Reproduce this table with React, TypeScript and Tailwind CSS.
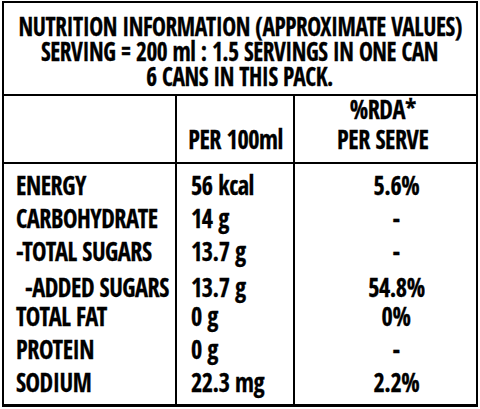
const rows: { name: string; indent?: boolean; per: string; rda: string; mt?: string }[] = [
  { name: 'ENERGY', per: '56 kcal', rda: '5.6%' },
  { name: 'CARBOHYDRATE', per: '14 g', rda: '-' },
  { name: '-TOTAL SUGARS', per: '13.7 g', rda: '-' },
  { name: '-ADDED SUGARS', indent: true, per: '13.7 g', rda: '54.8%', mt: 'mt-[3px]' },
  { name: 'TOTAL FAT', per: '0 g', rda: '0%', mt: 'mt-[-4px]' },
  { name: 'PROTEIN', per: '0 g', rda: '-' },
  { name: 'SODIUM', per: '22.3 mg', rda: '2.2%' },
];

function L({ children }: { children: React.ReactNode }) {
  return <span className="inline-block whitespace-nowrap scale-x-[0.9] origin-left">{children}</span>;
}
function C({ children }: { children: React.ReactNode }) {
  return <span className="inline-block whitespace-nowrap scale-x-[0.9] origin-center">{children}</span>;
}

export default function App() {
  return (
    <div
      className="w-[480px] h-[409px] bg-white pl-[2px] pt-[1px] text-black font-bold text-[27px] tracking-[-0.5px] [-webkit-text-stroke:0.3px_black]"
      style={{ fontFamily: '"Open Sans Condensed", "Roboto Condensed", "Liberation Sans Narrow", sans-serif' }}
    >
      <div className="w-[476px] h-[406px] border-2 border-b-[3px] border-black flex flex-col">
        <div className="h-[93px] shrink-0 border-b-2 border-black pt-[11px] text-[26px] leading-[25px] flex flex-col">
          <div className="flex justify-center"><C>NUTRITION INFORMATION (APPROXIMATE VALUES)</C></div>
          <div className="flex justify-center"><C>SERVING = 200 ml : 1.5 SERVINGS IN ONE CAN</C></div>
          <div className="flex justify-center"><C>6 CANS IN THIS PACK.</C></div>
        </div>
        <div className="flex-1 grid grid-cols-[173px_118px_1fr]">
          <div className="border-r-2 border-black flex flex-col">
            <div className="h-[68px] shrink-0 border-b-2 border-black" />
            <div className="pt-[4px]">
              {rows.map((r) => (
                <div
                  key={r.name}
                  className={`h-[33px] leading-[33px] whitespace-nowrap ${r.indent ? 'pl-[21px]' : 'pl-[12px]'} ${r.mt ?? ''}`}
                >
                  <L>{r.name}</L>
                </div>
              ))}
            </div>
          </div>
          <div className="border-r-2 border-black flex flex-col">
            <div className="h-[68px] shrink-0 border-b-2 border-black flex flex-col justify-end items-center pb-[8px] leading-[30px]">
              <C>PER 100ml</C>
            </div>
            <div className="pt-[4px]">
              {rows.map((r) => (
                <div key={r.name} className={`h-[33px] leading-[33px] whitespace-nowrap pl-[14px] ${r.mt ?? ''}`}>
                  <L>{r.per}</L>
                </div>
              ))}
            </div>
          </div>
          <div className="flex flex-col">
            <div className="h-[68px] shrink-0 border-b-2 border-black flex flex-col justify-end items-center pb-[8px] pr-[6px] leading-[30px]">
              <C>%RDA*</C>
              <C>PER SERVE</C>
            </div>
            <div className="pt-[4px]">
              {rows.map((r) => (
                <div key={r.name} className={`h-[33px] leading-[33px] text-center pl-[21px] ${r.mt ?? ''}`}>
                  <C>{r.rda}</C>
                </div>
              ))}
            </div>
          </div>
        </div>
      </div>
    </div>
  );
}
